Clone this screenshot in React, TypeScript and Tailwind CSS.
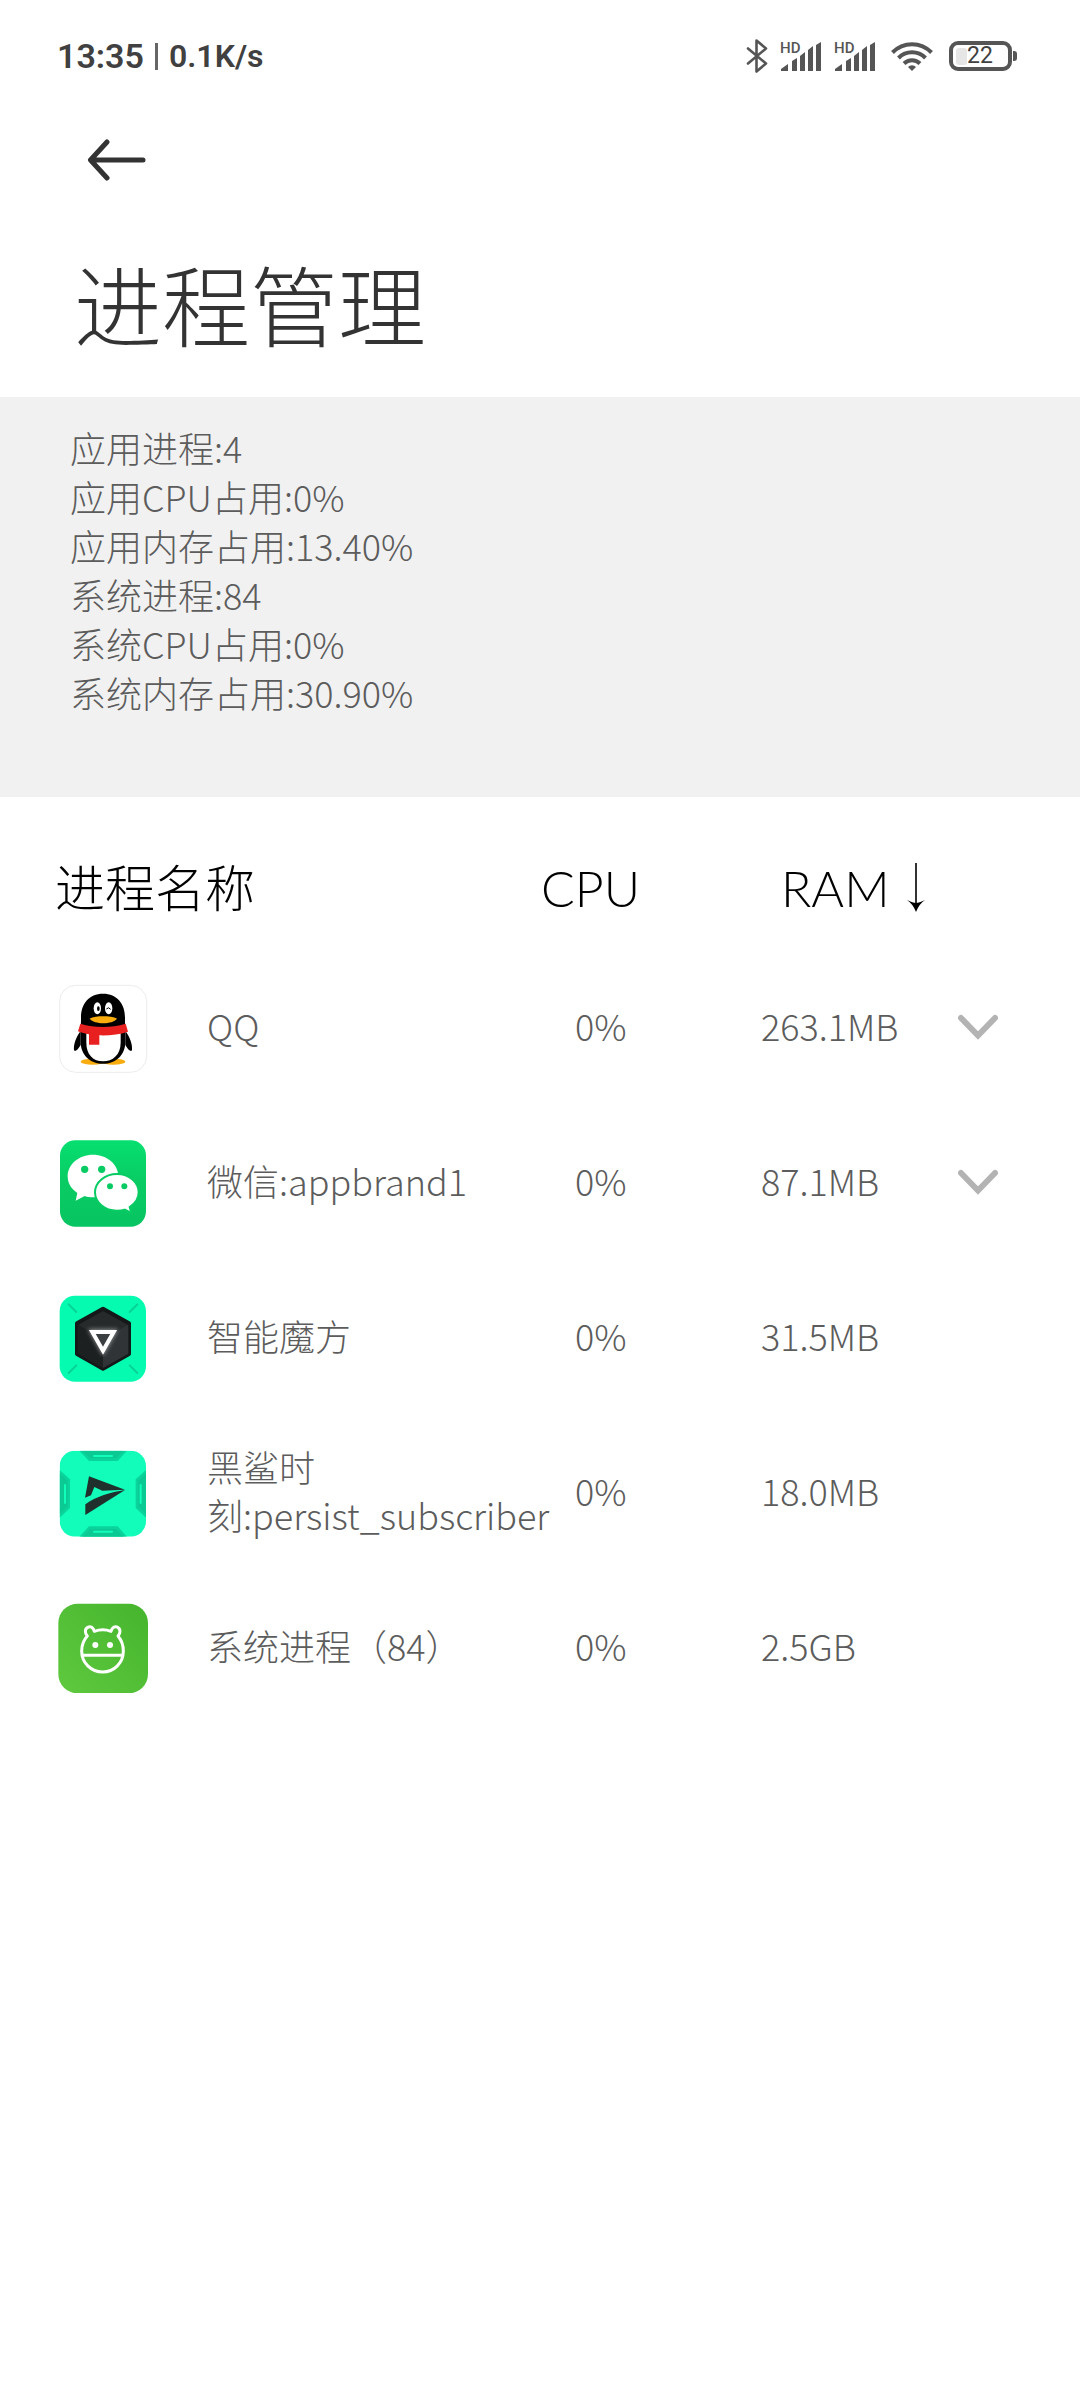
import type { ReactNode } from "react";

type ProcessRow = {
  name: string;
  cpu: string;
  ram: string;
  icon: ReactNode;
  expandable?: boolean;
};

const summary = [
  "应用进程:4",
  "应用CPU占用:0%",
  "应用内存占用:13.40%",
  "系统进程:84",
  "系统CPU占用:0%",
  "系统内存占用:30.90%",
];

function SignalIcon() {
  return (
    <svg width="42" height="34" viewBox="0 0 42 34" fill="#555" aria-hidden="true" className="overflow-visible">
      <text x="0" y="14" fontSize="15" fontWeight="500" fontFamily="Roboto, sans-serif">
        HD
      </text>
      <path d="M1 32v-2l7-5v7z" />
      <path d="M12 32V22l5-3v13z" />
      <path d="M20 32V17l5-4v19z" />
      <path d="M28 32V11l5-4v25z" />
      <path d="M36 32V6l5-3v29z" />
    </svg>
  );
}

function StatusBar() {
  return (
    <div className="flex h-[112px] items-center justify-between pr-[63px] pl-[57px] font-[Roboto,sans-serif] text-[#404040]">
      <div className="flex items-center font-semibold">
        <span className="text-[34px]">13:35</span>
        <span className="mx-[11px] h-[27px] w-[3px] bg-[#666]" />
        <span className="text-[32px]">0.1K/s</span>
      </div>
      <div className="flex items-center">
        <svg width="22" height="34" viewBox="0 0 22 34" fill="none" stroke="#555" strokeWidth="2.6" strokeLinejoin="round" strokeLinecap="round" className="mr-[12px]" aria-hidden="true">
          <path d="M2 9.500l18 15-9.500 8V1.500l9.500 8-18 15" />
        </svg>
        <span className="mr-[12px]">
          <SignalIcon />
        </span>
        <span className="mr-[15px]">
          <SignalIcon />
        </span>
        <svg width="42" height="32" viewBox="0 0 42 32" fill="none" stroke="#555" strokeWidth="4" className="mr-[16px]" aria-hidden="true">
          <path d="M1.500 12.500a27 27 0 0 1 39 0" />
          <path d="M7.500 18a19 19 0 0 1 27 0" />
          <path d="M13 23.500a11.500 11.500 0 0 1 16 0" />
          <path d="M21 31l-4-4a5.500 5.500 0 0 1 8 0z" fill="#555" stroke="none" />
        </svg>
        <div className="flex items-center">
          <div className="flex h-[30px] w-[63px] items-center rounded-[9px] border-4 border-[#555] pl-[3px]">
            <span className="h-[17px] w-[11px] rounded-[3px] bg-[#e6e6e6]" />
            <span className="text-[23px] leading-[24px] font-normal">22</span>
          </div>
          <span className="ml-[1px] h-[10px] w-[4px] rounded-r-[3px] bg-[#555]" />
        </div>
      </div>
    </div>
  );
}

function QQIcon() {
  return (
    <svg width="90" height="90" viewBox="24 36 270 270" aria-hidden="true">
      <rect x="29" y="43" width="261" height="261" rx="48" fill="#fff" stroke="#ececec" strokeWidth="3" />
      <ellipse cx="128" cy="272" rx="36" ry="9" fill="#f8ac0d" />
      <ellipse cx="190" cy="272" rx="36" ry="9" fill="#f8ac0d" />
      <path d="M92 180C78 198 70 220 72 238c6 6 14-6 20-16zM226 180c14 18 22 40 20 58-6 6-14-6-20-16z" fill="#000" />
      <path d="M159 68c-42 0-66 30-66 72 0 20-1 40-1 72 0 42 30 66 67 66s67-24 67-66c0-32-1-52-1-72 0-42-24-72-66-72z" fill="#000" />
      <path d="M109 180h103v35c0 36-24 56-53 56s-50-20-50-56z" fill="#fff" />
      <ellipse cx="142" cy="112" rx="11" ry="18" fill="#fff" />
      <ellipse cx="176" cy="112" rx="11" ry="18" fill="#fff" />
      <ellipse cx="145" cy="113" rx="4" ry="7" fill="#000" />
      <path d="M169 114q7-8 13 1" fill="none" stroke="#000" strokeWidth="3" />
      <path d="M119 143c10-10 72-10 82 0-14 18-68 18-82 0z" fill="#f8ac0d" />
      <path d="M91 158c44 13 92 13 136 0l7 24c-26 9-58 12-86 11v28h-31v-31c-12-2-22-5-33-9z" fill="#e8201f" />
    </svg>
  );
}

function WeChatIcon() {
  return (
    <svg width="90" height="90" viewBox="24 22 270 270" aria-hidden="true">
      <defs>
        <linearGradient id="wechat-bg" x1="0" y1="0" x2="0" y2="1">
          <stop offset="0" stopColor="#06df70" />
          <stop offset="0.5" stopColor="#09cb63" />
          <stop offset="1" stopColor="#07c562" />
        </linearGradient>
      </defs>
      <rect x="30" y="29" width="258" height="259" rx="46" fill="url(#wechat-bg)" />
      <path d="M129 72c-42 0-76 29-76 65 0 21 11 38 29 50l-5 23 27-14c8 3 16 4 25 4 42 0 76-27 76-63s-34-65-76-65z" fill="#fff" />
      <path d="M201 130c-37 0-66 25-66 55s29 55 66 55c8 0 16-1 23-3l20 10-5-18c16-10 27-26 27-44 0-30-28-55-65-55z" fill="#fff" stroke="#09cb63" strokeWidth="6" />
      <circle cx="104" cy="116" r="11" fill="#09cb63" />
      <circle cx="155" cy="116" r="11" fill="#09cb63" />
      <circle cx="180" cy="167" r="9" fill="#09cb63" />
      <circle cx="223" cy="167" r="9" fill="#09cb63" />
    </svg>
  );
}

function CubeIcon() {
  return (
    <svg width="90" height="90" viewBox="24 37 270 270" aria-hidden="true">
      <defs>
        <filter id="cube-glow" x="-30%" y="-30%" width="160%" height="160%">
          <feGaussianBlur stdDeviation="6" />
        </filter>
      </defs>
      <rect x="29" y="45" width="259" height="258" rx="46" fill="#05fcb0" />
      <path d="M56 71l23 23M262 71l-23 23M56 277l23-23M262 277l-23-23" stroke="#08d297" strokeWidth="6" strokeLinecap="round" />
      <path d="M159 84l78 44v92l-78 44-78-44v-92z" fill="#262a2b" stroke="#151819" strokeWidth="12" strokeLinejoin="round" />
      <path d="M159 180v82l76-43v-88z" fill="#303436" />
      <path d="M159 180v82l-76-43v-88z" fill="#1d2021" />
      <path d="M126 153h66l-33 58z" fill="none" stroke="#fff" strokeWidth="14" opacity="0.5" filter="url(#cube-glow)" />
      <path d="M127 154h64l-32 56z" fill="#3b3f41" stroke="#fff" strokeWidth="12" />
    </svg>
  );
}

function SharkIcon() {
  return (
    <svg width="90" height="90" viewBox="24 37 270 270" aria-hidden="true">
      <defs>
        <clipPath id="shark-clip">
          <rect x="29" y="45" width="259" height="258" rx="46" />
        </clipPath>
      </defs>
      <g clipPath="url(#shark-clip)">
        <rect x="29" y="45" width="259" height="258" fill="#12fdb9" />
        <path d="M88 45l29 31h86l28-31zM88 303l29-31h86l28 31zM29 103l31 28v86l-31 29zM288 103l-31 28v86l31 29z" fill="#0ad49b" />
        <path d="M97 45l23 23h78l23-23zM97 303l23-23h78l23 23zM29 113l23 22v78l-23 22zM288 113l-23 22v78l23 22z" fill="#0bc993" />
        <path d="M132 61h54M132 288h54M45 148v54M272 148v54" stroke="#12fdb9" strokeWidth="6" strokeLinecap="round" />
      </g>
      <path d="M117 122l108 40-68 3-24-11-10 25-18 7z" fill="#20302d" />
      <path d="M225 163l-119 75v-32c32-24 75-36 119-43z" fill="#20302d" />
    </svg>
  );
}

function SystemIcon() {
  return (
    <svg width="90" height="90" viewBox="24 37 270 270" aria-hidden="true">
      <defs>
        <linearGradient id="system-bg" x1="0" y1="1" x2="1" y2="0">
          <stop offset="0" stopColor="#5fc93f" />
          <stop offset="1" stopColor="#45b52d" />
        </linearGradient>
      </defs>
      <rect x="25" y="39" width="269" height="269" rx="58" fill="url(#system-bg)" />
      <g fill="none" stroke="#fff" strokeWidth="9" strokeLinejoin="round">
        <path d="M112 136c-8-9-8-21 1-26 9-5 17 1 20 12 17-6 34-6 50 0 3-11 12-17 20-12 9 5 9 17 1 26 10 12 16 27 16 45 0 35-27 63-62 63s-63-28-63-63c0-18 6-33 17-45z" />
        <path d="M97 194h122" />
      </g>
      <circle cx="136" cy="163" r="9" fill="#fff" />
      <circle cx="180" cy="163" r="9" fill="#fff" />
    </svg>
  );
}

const processes: ProcessRow[] = [
  { name: "QQ", cpu: "0%", ram: "263.1MB", icon: <QQIcon />, expandable: true },
  { name: "微信:appbrand1", cpu: "0%", ram: "87.1MB", icon: <WeChatIcon />, expandable: true },
  { name: "智能魔方", cpu: "0%", ram: "31.5MB", icon: <CubeIcon /> },
  { name: "黑鲨时刻:persist_subscriber", cpu: "0%", ram: "18.0MB", icon: <SharkIcon /> },
  { name: "系统进程（84）", cpu: "0%", ram: "2.5GB", icon: <SystemIcon /> },
];

export default function App() {
  return (
    <main className="min-h-screen bg-white font-['Noto_Sans_CJK_SC',sans-serif] font-light">
      <StatusBar />
      <header>
        <button type="button" aria-label="返回" className="ml-[87px] block h-[96px]">
          <svg width="60" height="42" viewBox="0 0 60 42" fill="none" stroke="#333" strokeWidth="5" strokeLinecap="round" strokeLinejoin="round">
            <path d="M20 3L3.500 21 20 39M4 21h52" />
          </svg>
        </button>
        <h1 className="px-[74px] pt-[34px] pb-[35px] text-[88px] leading-[120px] text-[#333]">进程管理</h1>
      </header>

      <section className="bg-[#f1f1f1] px-[70px] pt-[26px] pb-[80px] text-[36px] leading-[49px] text-[#5c5c5c]">
        {summary.map((line) => (
          <p key={line}>{line}</p>
        ))}
      </section>

      <table className="w-full table-fixed text-left">
        <colgroup>
          <col className="w-[207px]" />
          <col />
          <col className="w-[220px]" />
          <col className="w-[190px]" />
          <col className="w-[129px]" />
        </colgroup>
        <thead>
          <tr className="font-[Lato,'Noto_Sans_CJK_SC',sans-serif] text-[50px] leading-[54px] text-black">
            <th colSpan={2} className="pt-[64px] pb-[35px] pl-[55px] font-light">
              进程名称
            </th>
            <th className="pt-[64px] pb-[35px] font-light">CPU</th>
            <th colSpan={2} className="pt-[64px] pb-[35px] pl-[20px] font-light">
              <button type="button" className="flex items-center gap-[16px]">
                RAM
                <svg width="20" height="50" viewBox="0 0 20 50" aria-hidden="true">
                  <path d="M10 0v44" stroke="#333" strokeWidth="2" />
                  <path d="M1 37q6 3 9 3t9-3q-6 4-9 12-3-8-9-12z" />
                </svg>
              </button>
            </th>
          </tr>
        </thead>
        <tbody>
          {processes.map((item) => (
            <tr key={item.name} className="h-[155px] text-[36px] leading-[48px] text-[#5c5c5c]">
              <td className="pl-[58px]">{item.icon}</td>
              <td className="pb-[5px]">{item.name}</td>
              <td className="pb-[5px] pl-[34px]">{item.cpu}</td>
              <td className="pb-[5px]">{item.ram}</td>
              <td>
                {item.expandable ? (
                  <button type="button" aria-label={`展开 ${item.name}`} className="ml-[7px] block">
                    <svg width="40" height="28" viewBox="0 0 40 28" fill="none" stroke="#b3b3b3" strokeWidth="6">
                      <path d="M3 4l17 17.500L37 4" strokeLinecap="round" />
                    </svg>
                  </button>
                ) : null}
              </td>
            </tr>
          ))}
        </tbody>
      </table>
    </main>
  );
}
